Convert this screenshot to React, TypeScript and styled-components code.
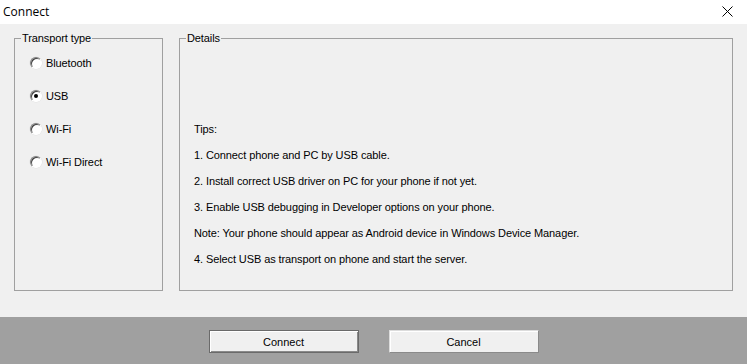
import React, { useState } from 'react';
import styled, { createGlobalStyle } from 'styled-components';

const GlobalStyle = createGlobalStyle`
  html, body {
    margin: 0;
    padding: 0;
    background: #f0f0f0;
  }
  * {
    box-sizing: border-box;
  }
`;

type Transport = 'bluetooth' | 'usb' | 'wifi' | 'wifidirect';

const transports: { id: Transport; label: string }[] = [
  { id: 'bluetooth', label: 'Bluetooth' },
  { id: 'usb', label: 'USB' },
  { id: 'wifi', label: 'Wi-Fi' },
  { id: 'wifidirect', label: 'Wi-Fi Direct' },
];

const tips = [
  'Tips:',
  '1. Connect phone and PC by USB cable.',
  '2. Install correct USB driver on PC for your phone if not yet.',
  '3. Enable USB debugging in Developer options on your phone.',
  'Note: Your phone should appear as Android device in Windows Device Manager.',
  '4. Select USB as transport on phone and start the server.',
];

export default function App() {
  const [transport, setTransport] = useState<Transport>('usb');

  return (
    <>
      <GlobalStyle />
      <Window>
        <TitleBar>
          <Title>Connect</Title>
          <CloseButton aria-label="Close">
            <svg width="11" height="11" viewBox="0 0 11 11">
              <path d="M0.5 0.5 L10.5 10.5 M10.5 0.5 L0.5 10.5" stroke="#000" strokeWidth="1" />
            </svg>
          </CloseButton>
        </TitleBar>
        <Body>
          <TransportGroup>
            <Legend>Transport type</Legend>
            <RadioList>
              {transports.map((t) => (
                <RadioRow key={t.id} onClick={() => setTransport(t.id)}>
                  <RadioCircle checked={transport === t.id} />
                  <span>{t.label}</span>
                </RadioRow>
              ))}
            </RadioList>
          </TransportGroup>
          <DetailsGroup>
            <Legend>Details</Legend>
            <TipList>
              {tips.map((line) => (
                <TipLine key={line}>{line}</TipLine>
              ))}
            </TipList>
          </DetailsGroup>
        </Body>
        <Footer>
          <DialogButton primary>Connect</DialogButton>
          <DialogButton>Cancel</DialogButton>
        </Footer>
      </Window>
    </>
  );
}

const Window = styled.div`
  width: 747px;
  height: 364px;
  display: flex;
  flex-direction: column;
  font-family: Tahoma, 'Liberation Sans', Arial, sans-serif;
  font-size: 11px;
  letter-spacing: -0.1px;
  color: #000;
`;

const TitleBar = styled.div`
  height: 24px;
  background: #fff;
  display: flex;
  align-items: center;
  justify-content: space-between;
  padding: 0 0 2px 3px;
`;

const Title = styled.div`
  font-family: 'Open Sans', 'Noto Sans', sans-serif;
  font-size: 12px;
  letter-spacing: 0;
  color: #000;
`;

const CloseButton = styled.div`
  width: 46px;
  height: 24px;
  display: flex;
  align-items: center;
  justify-content: center;
  padding: 0 0 0 6px;
`;

const Body = styled.div`
  flex: 1;
  display: flex;
  gap: 16px;
  padding: 8px 14px 26px 14px;
`;

const Group = styled.fieldset`
  margin: 0;
  border: 1px solid #a0a0a0;
  min-width: 0;
  padding: 0;
`;

const TransportGroup = styled(Group)`
  width: 149px;
`;

const DetailsGroup = styled(Group)`
  flex: 1;
`;

const Legend = styled.legend`
  margin-left: 6px;
  padding: 0 1px 0 1px;
  line-height: 13px;
`;

const RadioList = styled.div`
  display: flex;
  flex-direction: column;
  gap: 20px;
  padding: 11px 0 0 15px;
`;

const RadioRow = styled.label`
  display: flex;
  align-items: center;
  gap: 3px;
  height: 13px;
  cursor: default;
`;

const RadioCircle = styled.span<{ checked: boolean }>`
  position: relative;
  width: 12px;
  height: 12px;
  border-radius: 50%;
  background: #fff;
  border: 1px solid;
  border-color: #808080 #ffffff #ffffff #808080;
  box-shadow: inset 1px 1px 0 #404040, 0 0 0 0.5px #e0e0e0;
  margin-right: 1px;

  &::after {
    content: '';
    display: ${(p) => (p.checked ? 'block' : 'none')};
    position: absolute;
    left: 3px;
    top: 3px;
    width: 4px;
    height: 4px;
    border-radius: 50%;
    background: #000;
  }
`;

const TipList = styled.div`
  display: flex;
  flex-direction: column;
  gap: 13px;
  padding: 78px 0 0 14px;
`;

const TipLine = styled.div`
  line-height: 13px;
  white-space: nowrap;
`;

const Footer = styled.div`
  height: 47px;
  background: #a0a0a0;
  display: flex;
  justify-content: center;
  gap: 30px;
  padding-top: 13px;
`;

const DialogButton = styled.button<{ primary?: boolean }>`
  width: 150px;
  height: 23px;
  margin: 0;
  padding: 0;
  font: inherit;
  color: #000;
  background: #f0f0f0;
  border: 1px solid;
  border-color: ${(p) => (p.primary ? '#6a6a6a' : '#dcdcdc #8a8a8a #8a8a8a #dcdcdc')};
  box-shadow: ${(p) =>
    p.primary ? 'inset 1px 1px 0 #fff, inset -1px -1px 0 #8a8a8a' : 'inset 1px 1px 0 #fff'};
`;
